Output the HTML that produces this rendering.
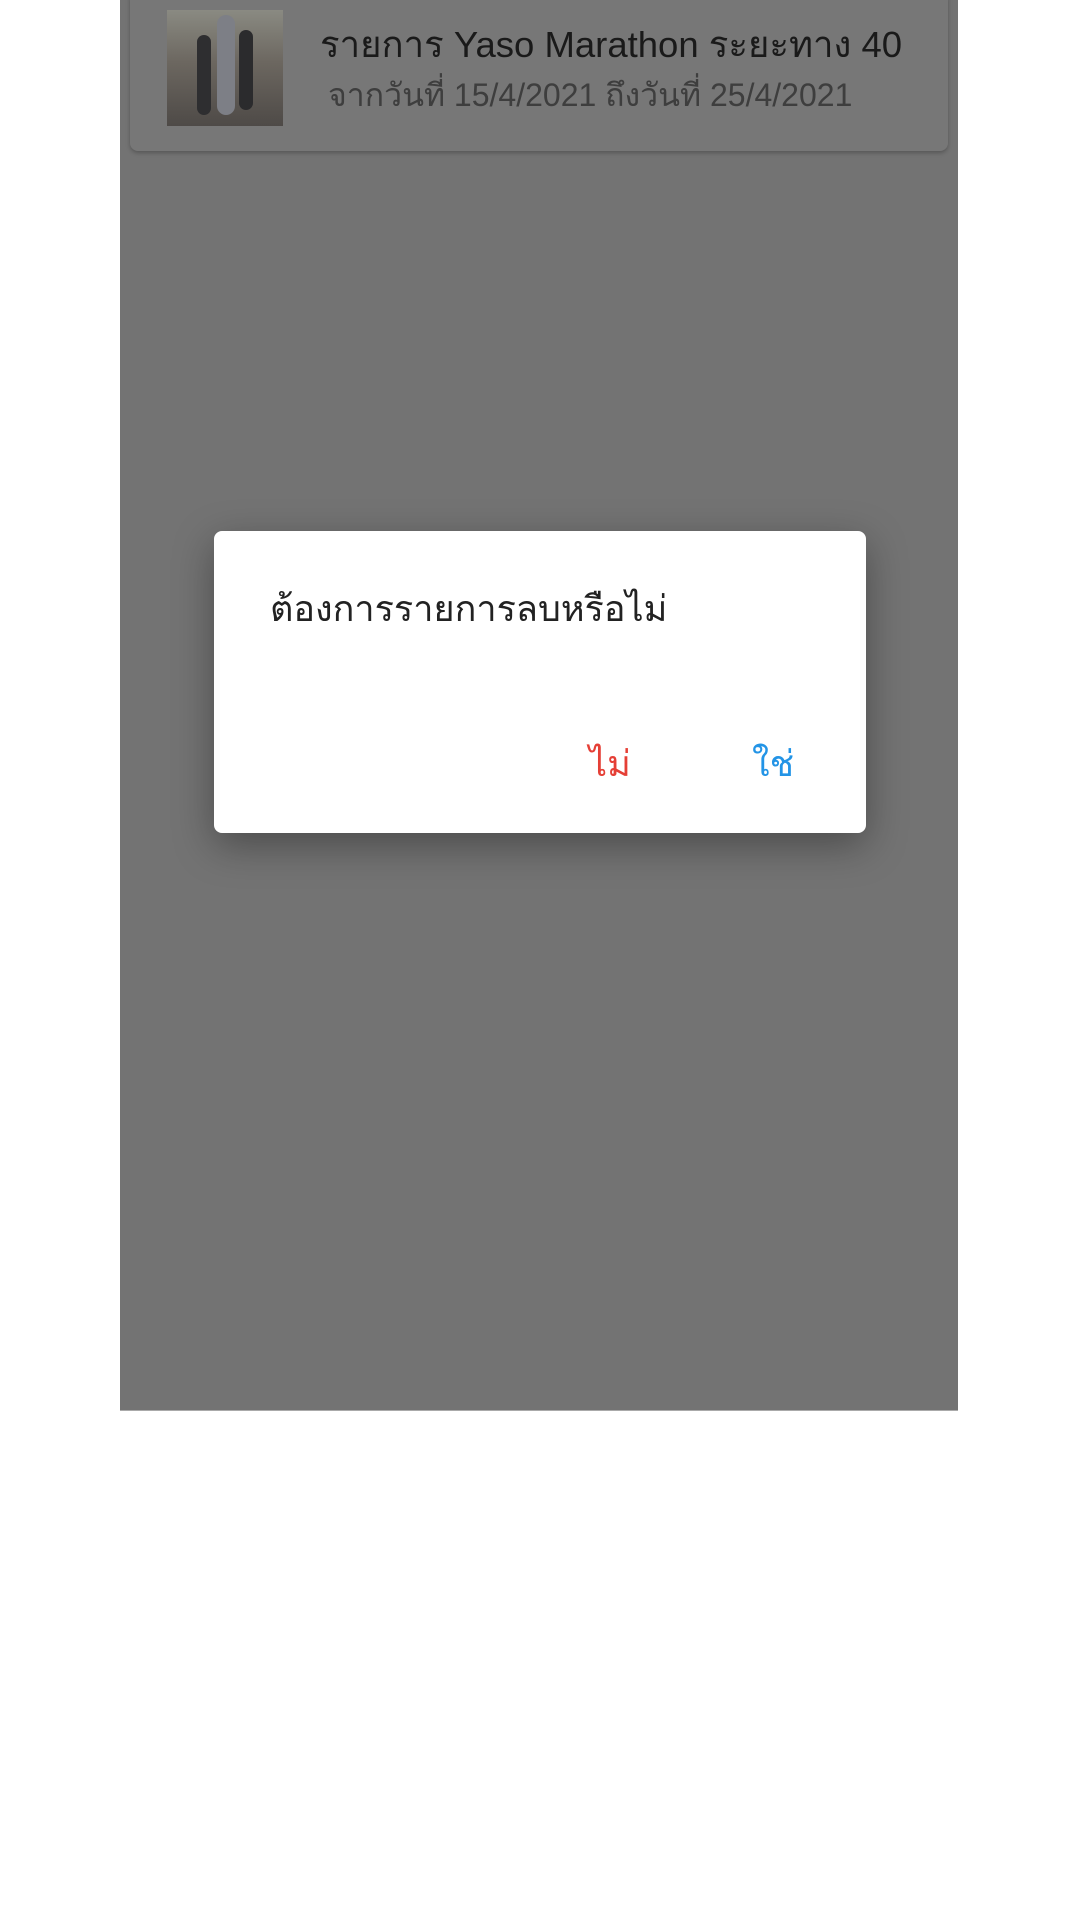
<!DOCTYPE html>
<html><head><meta charset="utf-8"><style>
body{margin:0;width:1080px;height:1920px;background:#fff;position:relative;overflow:hidden;font-family:"Liberation Sans","Noto Sans CJK SC",sans-serif}
.panel{position:absolute;left:120px;top:0;width:838px;height:1410px;background:#737373;border-bottom:1px solid #aaa}
.card{position:absolute;left:130px;top:-10px;width:818px;height:161px;background:#777;border-radius:8px;box-shadow:0 2px 4px rgba(0,0,0,.25)}
.img{position:absolute;left:167px;top:10px;width:116px;height:116px;background:linear-gradient(180deg,#8a8a82 0%,#6c6760 45%,#4e4a47 100%)}
.fig{position:absolute;background:#3a3a3c;border-radius:10px}
.t1{position:absolute;left:320px;top:16px;font-size:36.5px;color:#1a1a1a;white-space:nowrap}
.t2{position:absolute;left:328px;top:70px;font-size:32px;color:#3e3e3e;white-space:nowrap}
.dlg{position:absolute;left:214px;top:531px;width:652px;height:302px;background:#fff;border-radius:8px;box-shadow:0 12px 40px rgba(0,0,0,.35)}
.q{position:absolute;left:56px;top:49px;font-size:36px;color:#222;white-space:nowrap}
.b{position:absolute;top:204px;font-size:36px}
</style></head><body>
<div class="panel"></div>
<div class="card"></div>
<div class="img">
<div class="fig" style="left:30px;top:25px;width:14px;height:80px;background:#2e2e30"></div>
<div class="fig" style="left:50px;top:5px;width:18px;height:100px;background:#7d7f86"></div>
<div class="fig" style="left:72px;top:20px;width:14px;height:80px;background:#2b2b2d"></div>
</div>
<div class="t1">รายการ Yaso Marathon ระยะทาง 40</div>
<div class="t2">จากวันที่ 15/4/2021 ถึงวันที่ 25/4/2021</div>
<div class="dlg">
<div class="q">ต้องการรายการลบหรือไม่</div>
<div class="b" style="left:375px;color:#e53f36">ไม่</div>
<div class="b" style="left:538px;color:#2394e6">ใช่</div>
</div>
</body></html>
